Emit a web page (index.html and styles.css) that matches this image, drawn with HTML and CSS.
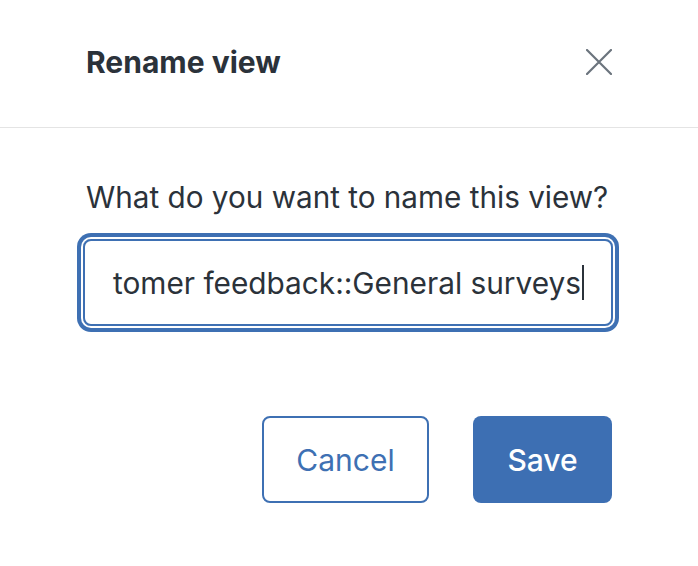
FILE: index.html
```html
<!DOCTYPE html>
<html>
<head>
<meta charset="utf-8">
<link rel="stylesheet" href="styles.css">
</head>
<body>
<div class="dialog">
  <div class="header">
    <h1 class="title">Rename view</h1>
    <button class="close" aria-label="Close">
      <svg width="26" height="26" viewBox="0 0 26 26"><path d="M1 1 L25 25 M25 1 L1 25" stroke="#6b747d" stroke-width="2.2" stroke-linecap="round" fill="none"/></svg>
    </button>
  </div>
  <div class="body">
    <label class="label">What do you want to name this view?</label>
    <div class="input"><span class="value">tomer feedback::General surveys</span><span class="caret"></span></div>
    <div class="actions">
      <button class="btn btn-secondary">Cancel</button>
      <button class="btn btn-primary">Save</button>
    </div>
  </div>
</div>
</body>
</html>
```

FILE: styles.css
```css
html, body {
  margin: 0;
  padding: 0;
  background: #ffffff;
}
body {
  font-family: Inter, "Liberation Sans", sans-serif;
  color: #2b323a;
}
.dialog {
  width: 698px;
}
.header {
  height: 128px;
  border-bottom: 1px solid #e4e4e4;
  display: flex;
  align-items: center;
  justify-content: space-between;
  padding: 0 86px 4px;
  box-sizing: border-box;
}
.title {
  margin: 0;
  font-size: 30px;
  line-height: 36px;
  font-weight: 700;
  color: #2b323a;
}
.close {
  border: 0;
  background: none;
  padding: 0;
  display: flex;
}
.body {
  padding: 51px 86px 0;
}
.label {
  display: block;
  font-size: 29.7px;
  line-height: 36px;
  white-space: nowrap;
  color: #2b323a;
}
.input {
  margin: 24px -1px 0 -3px;
  height: 87px;
  box-sizing: border-box;
  border: 2px solid #3e70b3;
  border-radius: 8px;
  box-shadow: 0 0 0 2px #ffffff, 0 0 0 6px #3e70b3;
  display: flex;
  align-items: center;
  padding-left: 28px;
  font-size: 29.8px;
  white-space: nowrap;
  color: #2b323a;
}
.caret {
  display: inline-block;
  width: 2px;
  height: 35px;
  background: #2b323a;
  margin-left: 1px;
}
.actions {
  display: flex;
  justify-content: flex-end;
  gap: 44px;
  margin-top: 90px;
}
.btn {
  height: 87px;
  box-sizing: border-box;
  border-radius: 8px;
  font-family: Inter, "Liberation Sans", sans-serif;
  font-size: 30px;
  cursor: pointer;
}
.btn-secondary {
  width: 167px;
  background: #ffffff;
  border: 2px solid #3e70b3;
  color: #3e70b3;
}
.btn-primary {
  width: 139px;
  background: #3d6fb3;
  border: 0;
  color: #ffffff;
  font-weight: 500;
}
```
